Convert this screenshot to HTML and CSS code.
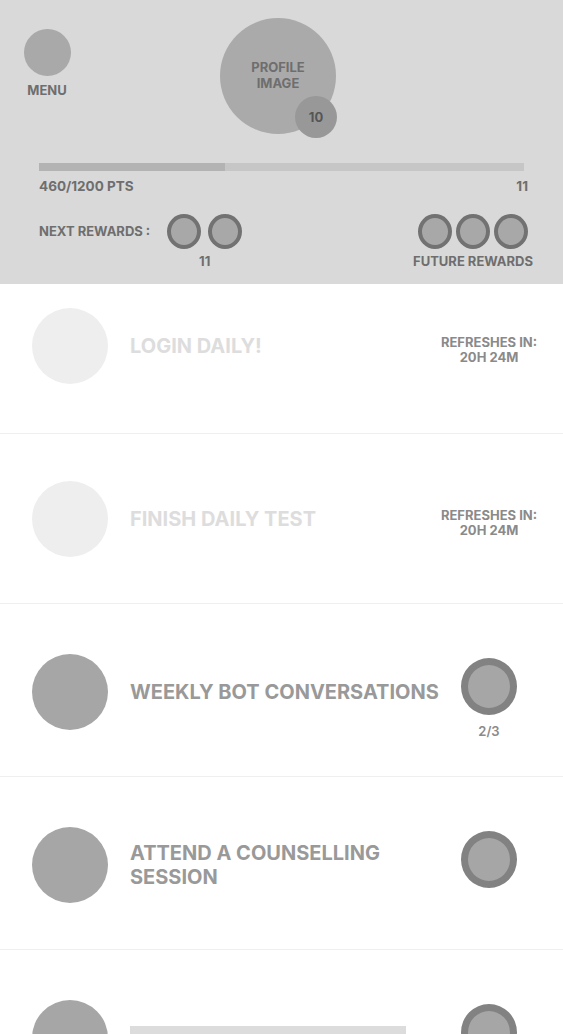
FILE: index.html
```html
<!DOCTYPE html>
<html lang="en">
<head>
    <meta charset="UTF-8">
    <meta name="viewport" content="width=device-width, initial-scale=1.0">
    <title>Rewards</title>
    <link rel="stylesheet" href="styles.css">
</head>
<body>
    <header class="header">
        <div class="header-top">
            <div class="menu">
                <div class="menu-dot"></div>
                <span class="menu-label">MENU</span>
            </div>
            <div class="profile">
                <span class="profile-label">PROFILE<br>IMAGE</span>
                <span class="level-badge">10</span>
            </div>
        </div>

        <div class="progress">
            <div class="progress-track"><div class="progress-fill" style="width: 38.4%;"></div></div>
            <div class="progress-labels">
                <span>460/1200 PTS</span>
                <span>11</span>
            </div>
        </div>

        <div class="rewards">
            <div class="rewards-next">
                <span class="rewards-title">NEXT REWARDS :</span>
                <div class="reward-group">
                    <div class="reward-dots">
                        <span class="reward-dot"></span>
                        <span class="reward-dot"></span>
                    </div>
                    <span class="reward-caption">11</span>
                </div>
            </div>
            <div class="reward-group future">
                <div class="reward-dots">
                    <span class="reward-dot"></span>
                    <span class="reward-dot"></span>
                    <span class="reward-dot"></span>
                </div>
                <span class="reward-caption">FUTURE REWARDS</span>
            </div>
        </div>
    </header>

    <ul class="task-list">
        <li class="task task-first done">
            <div class="task-icon"></div>
            <div class="task-title">LOGIN DAILY!</div>
            <div class="task-side refresh">REFRESHES IN:<br>20H 24M</div>
        </li>
        <li class="task task-second done">
            <div class="task-icon"></div>
            <div class="task-title">FINISH DAILY TEST</div>
            <div class="task-side refresh">REFRESHES IN:<br>20H 24M</div>
        </li>
        <li class="task">
            <div class="task-icon"></div>
            <div class="task-title">WEEKLY BOT CONVERSATIONS</div>
            <div class="task-side">
                <span class="task-ring"></span>
                <span class="task-count">2/3</span>
            </div>
        </li>
        <li class="task">
            <div class="task-icon"></div>
            <div class="task-title">ATTEND A COUNSELLING SESSION</div>
            <div class="task-side">
                <span class="task-ring"></span>
            </div>
        </li>
        <li class="task">
            <div class="task-icon"></div>
            <div class="task-title"><div class="title-placeholder"></div></div>
            <div class="task-side">
                <span class="task-ring"></span>
            </div>
        </li>
    </ul>
</body>
</html>
```

FILE: styles.css
```css
* {
    box-sizing: border-box;
}
body {
    margin: 0;
    font-family: Inter, 'Liberation Sans', sans-serif;
    background-color: white;
    overflow: hidden;
}

/* header */
.header {
    height: 284px;
    background-color: #d9d9d9;
    padding: 0 35px 0 39px;
}
.header-top {
    display: flex;
    align-items: flex-start;
    height: 163px;
}
.menu {
    display: flex;
    flex-direction: column;
    align-items: center;
    margin: 29px 0 0 -16px;
    width: 48px;
}
.menu-dot {
    width: 47px;
    height: 47px;
    border-radius: 50%;
    background-color: #a9a9a9;
}
.menu-label {
    margin-top: 6px;
    font-size: 13px;
    font-weight: 700;
    color: #6e6e6e;
}
.profile {
    position: relative;
    margin: 18px 0 0 149px;
    width: 116px;
    height: 116px;
    border-radius: 50%;
    background-color: #aaaaaa;
    display: flex;
    justify-content: center;
    padding-top: 41px;
}
.profile-label {
    font-size: 13px;
    font-weight: 700;
    line-height: 16px;
    text-align: center;
    color: #6e6e6e;
}
.level-badge {
    position: absolute;
    left: 75px;
    top: 78px;
    width: 42px;
    height: 42px;
    border-radius: 50%;
    background-color: #989898;
    display: flex;
    align-items: center;
    justify-content: center;
    font-size: 13px;
    font-weight: 700;
    color: #555;
}

.progress-track {
    height: 8px;
    margin-right: 4px;
    background-color: #c6c6c6;
}
.progress-fill {
    height: 100%;
    background-color: #b3b3b3;
}
.progress-labels {
    display: flex;
    justify-content: space-between;
    margin-top: 7px;
    font-size: 13.5px;
    font-weight: 700;
    color: #6e6e6e;
}

.rewards {
    display: flex;
    justify-content: space-between;
    align-items: flex-start;
    margin-top: 20px;
}
.rewards-next {
    display: flex;
    align-items: flex-start;
}
.rewards-title {
    margin-top: 9px;
    margin-right: 17px;
    font-size: 13px;
    font-weight: 700;
    color: #6e6e6e;
}
.reward-group {
    display: flex;
    flex-direction: column;
    align-items: center;
}
.reward-dots {
    display: flex;
    gap: 7px;
}
.future {
    margin-right: -5px;
}
.future .reward-dots {
    gap: 4px;
}
.reward-dot {
    width: 34px;
    height: 35px;
    border-radius: 50%;
    border: 4px solid #727272;
    background-color: #a8a8a8;
}
.reward-caption {
    margin-top: 4px;
    font-size: 13px;
    font-weight: 700;
    color: #6e6e6e;
}

/* tasks */
.task-list {
    list-style: none;
    margin: 0;
    padding: 0;
}
.task {
    display: flex;
    align-items: flex-start;
    height: 173px;
    padding: 50px 24px 0 32px;
    border-bottom: 1px solid #efefef;
}
.task-first {
    height: 150px;
    padding-top: 24px;
}
.task-second {
    height: 170px;
    padding-top: 47px;
}
.task-icon {
    flex: none;
    width: 76px;
    height: 76px;
    border-radius: 50%;
    background-color: #a6a6a6;
}
.task-title {
    flex: 1;
    min-height: 76px;
    display: flex;
    align-items: center;
    margin: 0 -10px 0 22px;
    font-size: 20px;
    font-weight: 700;
    line-height: 24px;
    color: #999999;
}
.done .task-icon {
    background-color: #eeeeee;
}
.done .task-title {
    color: #dddddd;
}
.title-placeholder {
    width: 276px;
    height: 24px;
    margin-right: 30px;
    background-color: #dcdcdc;
}
.task-side {
    flex: none;
    width: 100px;
    display: flex;
    flex-direction: column;
    align-items: center;
    margin-top: 4px;
}
.refresh {
    margin-top: 27px;
    font-size: 13px;
    font-weight: 700;
    line-height: 15px;
    text-align: center;
    white-space: nowrap;
    color: #8a8a8a;
}
.task-ring {
    width: 56px;
    height: 57px;
    border-radius: 50%;
    border: 7px solid #828282;
    background-color: #a6a6a6;
}
.task-count {
    margin-top: 8px;
    font-size: 13px;
    font-weight: 600;
    color: #8a8a8a;
}
```
